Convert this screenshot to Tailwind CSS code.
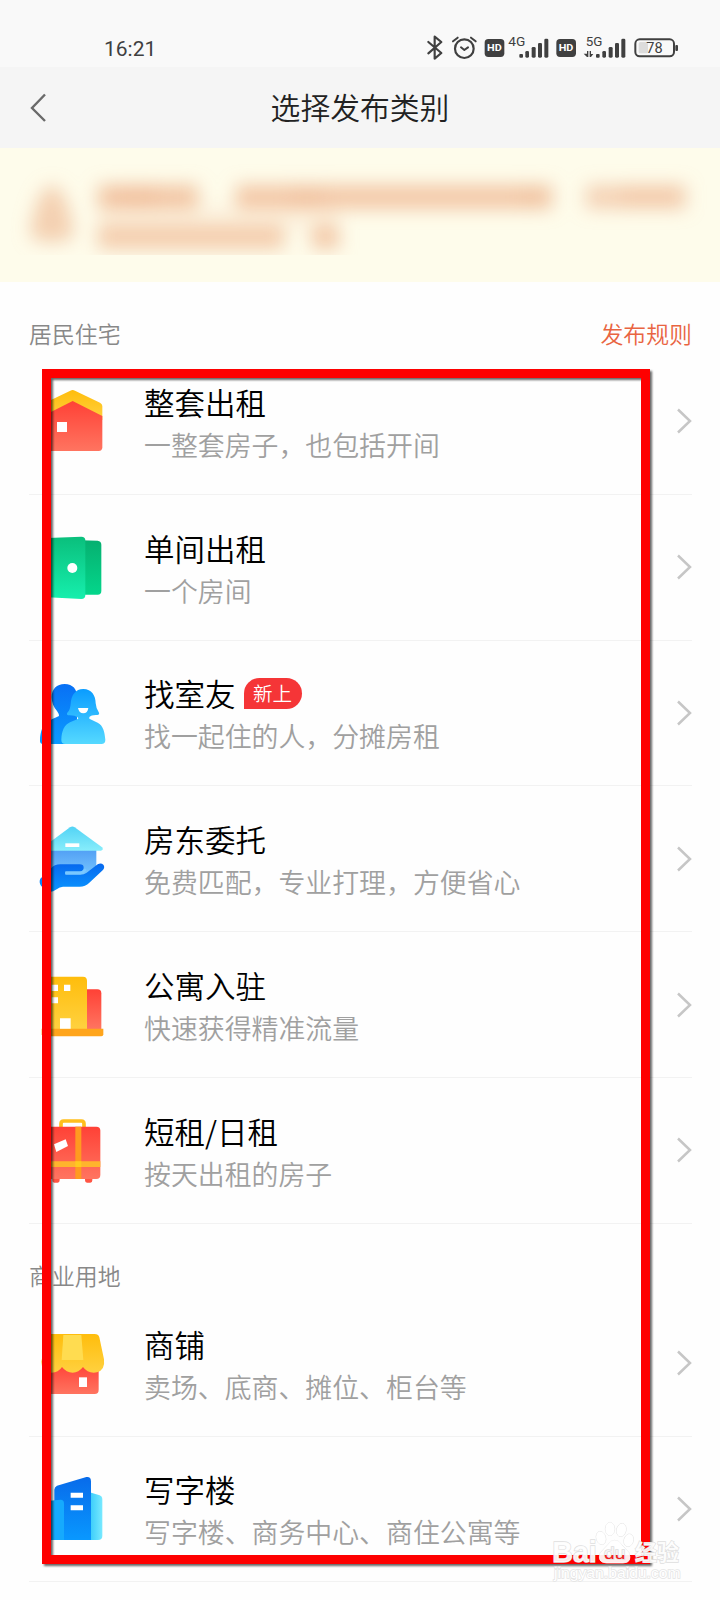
<!DOCTYPE html>
<html lang="zh-CN">
<head>
<meta charset="utf-8">
<meta name="viewport" content="width=720">
<title>选择发布类别</title>
<script src="https://cdn.jsdelivr.net/npm/@tailwindcss/browser@4"></script>
</head>
<body class="bg-white">
<div class="relative flex h-[1600px] w-[720px] flex-col overflow-hidden bg-[#fefefe] font-['Noto_Sans_CJK_SC','Noto_Sans',sans-serif]">

  <!-- Status bar -->
  <div class="flex h-[67px] shrink-0 items-end justify-between bg-[#f9f9f9] pl-[104px] pr-[39px] text-[#404040]">
    <span class="mb-[6px] font-['Roboto',sans-serif] text-[21px] leading-[24px]">16:21</span>
    <svg class="mb-[4px] h-[30px] w-[256px]" viewBox="75 40 768 90" fill="none" stroke="#404040" stroke-linecap="round" stroke-linejoin="round">
      <path d="M85 67L124 100L104 117V51L124 67L85 101" stroke-width="6.5"/>
      <circle cx="193" cy="87" r="28" stroke-width="6.5"/>
      <path d="M183 83L193 91L204 83M159 65L173 54M227 65L213 54" stroke-width="6"/>
      <g fill="#404040" stroke="none">
        <rect x="254" y="58" width="59" height="54" rx="11"/>
        <rect x="469" y="58" width="59" height="54" rx="11"/>
        <rect x="358" y="103" width="11" height="11" rx="3"/><rect x="376" y="94" width="11" height="20" rx="4"/><rect x="395" y="82" width="12" height="32" rx="4"/><rect x="414" y="70" width="12" height="44" rx="4"/><rect x="433" y="57" width="12" height="57" rx="4"/>
        <rect x="588" y="103" width="11" height="11" rx="3"/><rect x="607" y="94" width="11" height="20" rx="4"/><rect x="626" y="82" width="12" height="32" rx="4"/><rect x="645" y="70" width="12" height="44" rx="4"/><rect x="664" y="57" width="12" height="57" rx="4"/>
        <path d="M551 102H561V94H565V112H561ZM569 94H573V103H580L573 112H569Z"/>
        <rect x="826" y="76" width="8" height="18" rx="3"/>
      </g>
      <rect x="716" y="67" width="28" height="34" rx="5" fill="#dcdcdc" stroke="none"/>
      <rect x="706" y="59" width="116" height="51" rx="13" stroke-width="6"/>
      <g stroke="none" font-family="Roboto, sans-serif">
        <text x="261" y="95" font-size="29" font-weight="700" fill="#fff" textLength="44" lengthAdjust="spacingAndGlyphs">HD</text>
        <text x="476" y="95" font-size="29" font-weight="700" fill="#fff" textLength="44" lengthAdjust="spacingAndGlyphs">HD</text>
        <text x="325" y="79" font-size="37" font-weight="400" fill="#404040" textLength="51" lengthAdjust="spacingAndGlyphs">4G</text>
        <text x="557" y="79" font-size="37" font-weight="400" fill="#404040" textLength="50" lengthAdjust="spacingAndGlyphs">5G</text>
        <text x="739" y="100" font-size="42" font-weight="400" fill="#404040" textLength="49" lengthAdjust="spacingAndGlyphs">78</text>
      </g>
    </svg>
  </div>

  <!-- Title bar -->
  <header class="grid h-[81px] shrink-0 grid-cols-[120px_1fr_120px] items-center bg-[#f5f5f5]">
    <svg class="ml-[28px] h-[32px] w-[20px]" viewBox="0 0 20 32" fill="none" stroke="#6a6a6a" stroke-width="2.4"><path d="M17 2.5L4 16L17 29"/></svg>
    <h1 class="pb-[3px] text-center text-[29.8px] font-[350] leading-[44px] text-[#222]">选择发布类别</h1>
  </header>

  <!-- Notice, obscured -->
  <div class="flex h-[134px] shrink-0 bg-[#fefceb]">
    <svg class="h-[107px] w-[720px]" viewBox="0 148 720 107">
      <defs><filter id="haze" x="-20%" y="-60%" width="140%" height="220%"><feGaussianBlur stdDeviation="9"/></filter></defs>
      <g filter="url(#haze)" fill="#f0bd99">
        <path d="M52 185C67 190 70 215 74 232Q74 242 52 242T30 232C34 215 37 190 52 185Z" opacity=".7"/>
        <rect x="98" y="185" width="100" height="24" opacity=".85"/><rect x="115" y="186" width="42" height="20" opacity=".6"/>
        <rect x="236" y="185" width="316" height="24" opacity=".82"/><rect x="290" y="186" width="34" height="20" opacity=".5"/><rect x="520" y="186" width="28" height="20" opacity=".3"/>
        <rect x="586" y="185" width="100" height="24" opacity=".65"/><rect x="620" y="186" width="60" height="20" opacity=".4"/>
        <rect x="98" y="225" width="186" height="24" opacity=".75"/><rect x="312" y="225" width="27" height="24" opacity=".8"/>
        <rect x="98" y="205" width="240" height="24" opacity=".15"/>
      </g>
    </svg>
  </div>

  <!-- Residential -->
  <main class="flex flex-col pl-[29px] pr-[28px]">
    <div class="flex h-[67px] items-start justify-between pt-[34px] text-[22.9px] leading-[34px]">
      <h2 class="font-[350] text-[#888]">居民住宅</h2>
      <a class="font-[350] text-[#e96441]">发布规则</a>
    </div>

    <div class="flex h-[145.8px] items-center border-b border-[#f2f2f2] pl-[9px]">
      <svg class="size-[70px] shrink-0" viewBox="53 78 210 210">
        <defs>
          <linearGradient id="red" x2="0" y2="1"><stop stop-color="#ff4136"/><stop offset="1" stop-color="#ff7460"/></linearGradient>
          <linearGradient id="gold" x2="0" y2="1"><stop stop-color="#ffbd0c"/><stop offset="1" stop-color="#ffd13f"/></linearGradient>
        </defs>
        <path d="M68 137Q68 132 73 129L150 92Q157 88 164 92L239 128Q246 132 246 138V180H68Z" fill="url(#gold)"/>
        <path d="M68 168L157 123L246 168V262Q246 273 235 273H79Q68 273 68 262Z" fill="url(#red)"/>
        <path d="M110 186H140V216H110Z" fill="#fff"/>
      </svg>
      <div class="ml-[36px] flex-1 pt-[3px]">
        <h3 class="text-[30.5px] font-[350] leading-[44px] text-black">整套出租</h3>
        <p class="text-[26.9px] font-[350] leading-[42px] text-[#a0a0a0]">一整套房子，也包括开间</p>
      </div>
      <svg class="h-[26px] w-[16px]" viewBox="0 0 16 26" fill="none" stroke="#c6c6c6" stroke-width="2.5"><path d="M2 1.5L14 13L2 24.5"/></svg>
    </div>

    <div class="flex h-[145.8px] items-center border-b border-[#f2f2f2] pl-[9px]">
      <svg class="size-[70px] shrink-0" viewBox="53 517 210 210">
        <defs>
          <linearGradient id="green" x2="0" y2="1"><stop stop-color="#0abf7c"/><stop offset="1" stop-color="#16efad"/></linearGradient>
          <linearGradient id="leaf" x2="0" y2="1"><stop stop-color="#06b070"/><stop offset="1" stop-color="#04d68b"/></linearGradient>
        </defs>
        <path d="M180 542L232 543Q243 544 243 555V694Q243 705 232 705H180Z" fill="url(#leaf)"/>
        <path d="M72 546Q72 536 82 535L183 531Q195 531 195 542V707Q195 718 183 718L82 713Q72 712 72 702Z" fill="url(#green)"/>
        <circle cx="156" cy="625" r="15" fill="#fff"/>
      </svg>
      <div class="ml-[36px] flex-1 pt-[3px]">
        <h3 class="text-[30.5px] font-[350] leading-[44px] text-black">单间出租</h3>
        <p class="text-[26.9px] font-[350] leading-[42px] text-[#a0a0a0]">一个房间</p>
      </div>
      <svg class="h-[26px] w-[16px]" viewBox="0 0 16 26" fill="none" stroke="#c6c6c6" stroke-width="2.5"><path d="M2 1.5L14 13L2 24.5"/></svg>
    </div>

    <div class="flex h-[145.8px] items-center border-b border-[#f2f2f2] pl-[9px]">
      <svg class="size-[70px] shrink-0" viewBox="53 54 210 210">
        <defs>
          <linearGradient id="navy" x2="0" y2="1"><stop stop-color="#0870f5"/><stop offset="1" stop-color="#0b9bff"/></linearGradient>
          <linearGradient id="sky" x2="0" y2="1"><stop stop-color="#0a9cff"/><stop offset="1" stop-color="#55d9ff"/></linearGradient>
        </defs>
        <path d="M133 72C158 72 170 89 170 108V252H68Q58 252 59 240C62 198 72 187 116 168Q116 161 110 153C100 142 94 128 94 112C94 87 109 72 133 72Z" fill="url(#navy)"/>
        <path d="M189 87C214 87 226 107 226 130Q227 146 236 158Q238 164 231 165Q213 164 207 171V176L232 188C249 197 253 216 255 239Q255 252 243 252H135Q123 252 123 240C124 212 132 195 149 187L174 176L172 172Q163 165 143 166Q137 163 142 157Q150 148 151 131C153 106 165 87 189 87Z" fill="url(#sky)"/>
        <path d="M173 144H204Q202 160 189 160Q176 160 173 144Z" fill="#fff"/>
      </svg>
      <div class="ml-[36px] flex-1 pt-[3px]">
        <div class="flex h-[44px] items-center">
          <h3 class="text-[30.5px] font-[350] leading-[44px] text-black">找室友</h3>
          <span class="ml-[8px] flex h-[31px] w-[58px] items-center justify-center rounded-full rounded-bl-[2px] bg-[#f53537] pb-[2px] text-[19.5px] font-[350] leading-none text-white">新上</span>
        </div>
        <p class="text-[26.9px] font-[350] leading-[42px] text-[#a0a0a0]">找一起住的人，分摊房租</p>
      </div>
      <svg class="h-[26px] w-[16px]" viewBox="0 0 16 26" fill="none" stroke="#c6c6c6" stroke-width="2.5"><path d="M2 1.5L14 13L2 24.5"/></svg>
    </div>

    <div class="flex h-[145.8px] items-center border-b border-[#f2f2f2] pl-[9px]">
      <svg class="size-[70px] shrink-0" viewBox="53 491 210 210">
        <defs>
          <linearGradient id="wall" x2="0" y2="1"><stop stop-color="#4e9bf3"/><stop offset="1" stop-color="#79c8ff"/></linearGradient>
          <linearGradient id="roof" x2="0" y2="1"><stop stop-color="#52d3f5"/><stop offset="1" stop-color="#87edfb"/></linearGradient>
          <linearGradient id="hand" x2="0" y2="1"><stop stop-color="#0768ee"/><stop offset="1" stop-color="#0a96ff"/></linearGradient>
        </defs>
        <path d="M84 560H228V625L190 650H84Z" fill="url(#wall)"/>
        <path d="M149 501Q156 496 163 501L245 561Q251 569 242 571H71Q62 569 68 561Z" fill="url(#roof)"/>
        <rect x="135" y="549" width="42" height="11" fill="#fff"/>
        <path d="M60 655L92 624Q102 612 120 612H178Q190 612 190 622Q190 633 177 633H135V643H180Q191 643 199 637L232 612Q242 606 249 613Q255 621 247 630L207 667Q195 679 178 679H128Q118 680 109 687Q96 697 80 694L62 676Q55 665 60 655Z" fill="url(#hand)"/>
        <path d="M138 638H179Q188 638 194 629" fill="none" stroke="#79c8ff" stroke-width="8" stroke-linecap="round"/>
      </svg>
      <div class="ml-[36px] flex-1 pt-[3px]">
        <h3 class="text-[30.5px] font-[350] leading-[44px] text-black">房东委托</h3>
        <p class="text-[26.9px] font-[350] leading-[42px] text-[#a0a0a0]">免费匹配，专业打理，方便省心</p>
      </div>
      <svg class="h-[26px] w-[16px]" viewBox="0 0 16 26" fill="none" stroke="#c6c6c6" stroke-width="2.5"><path d="M2 1.5L14 13L2 24.5"/></svg>
    </div>

    <div class="flex h-[145.8px] items-center border-b border-[#f2f2f2] pl-[9px]">
      <svg class="size-[70px] shrink-0" viewBox="53 59 210 210">
        <path d="M190 117H231Q243 117 243 129V236H190Z" fill="url(#red)"/>
        <path d="M72 92Q72 79 84 79H188Q200 79 200 92V236H72Z" fill="url(#gold)"/>
        <path d="M64 235H249V252Q249 258 243 258H70Q64 258 64 252Z" fill="#ffa51c"/>
        <path d="M94 103H113V122H94ZM131 103H150V122H131ZM94 141H113V159H94ZM119 204H151V235H119Z" fill="#fff"/>
      </svg>
      <div class="ml-[36px] flex-1 pt-[3px]">
        <h3 class="text-[30.5px] font-[350] leading-[44px] text-black">公寓入驻</h3>
        <p class="text-[26.9px] font-[350] leading-[42px] text-[#a0a0a0]">快速获得精准流量</p>
      </div>
      <svg class="h-[26px] w-[16px]" viewBox="0 0 16 26" fill="none" stroke="#c6c6c6" stroke-width="2.5"><path d="M2 1.5L14 13L2 24.5"/></svg>
    </div>

    <div class="flex h-[145.8px] items-center border-b border-[#f2f2f2] pl-[9px]">
      <svg class="size-[70px] shrink-0" viewBox="53 496 210 210">
        <path d="M122 532V522Q122 514 130 514H183Q191 514 191 522V532" fill="none" stroke="#ffbf1d" stroke-width="11"/>
        <path d="M96 680H118V692Q118 699 112 699H102Q96 699 96 692ZM194 680H216V692Q216 699 210 699H200Q194 699 194 692Z" fill="#ff5544"/>
        <rect x="74" y="531" width="166" height="157" rx="12" fill="url(#red)"/>
        <path d="M165 531H183V688H165Z" fill="#ff9a20"/>
        <path d="M74 635H240V652H74Z" fill="#ffb42d"/>
        <path d="M165 635H183V652H165Z" fill="#ffc91f"/>
        <path d="M101 584L136 569L143 589L108 607Z" fill="#fff"/>
      </svg>
      <div class="ml-[36px] flex-1 pt-[3px]">
        <h3 class="text-[30.5px] font-[350] leading-[44px] text-black">短租/日租</h3>
        <p class="text-[26.9px] font-[350] leading-[42px] text-[#a0a0a0]">按天出租的房子</p>
      </div>
      <svg class="h-[26px] w-[16px]" viewBox="0 0 16 26" fill="none" stroke="#c6c6c6" stroke-width="2.5"><path d="M2 1.5L14 13L2 24.5"/></svg>
    </div>

    <!-- Commercial -->
    <div class="flex h-[67px] items-start pt-[34px] text-[22.9px] leading-[34px]">
      <h2 class="font-[350] text-[#888]">商业用地</h2>
    </div>

    <div class="flex h-[145.8px] items-center border-b border-[#f2f2f2] pl-[9px]">
      <svg class="size-[70px] shrink-0" viewBox="53 264 210 210">
        <path d="M80 370H235V449Q235 462 223 462H92Q80 462 80 450Z" fill="url(#red)"/>
        <path d="M92 282H223Q234 282 237 292L251 358Q255 390 230 397Q203 402 188 381Q175 398 157 398Q138 398 125 381Q114 398 94 398Q63 395 63 365L78 292Q81 282 92 282Z" fill="url(#gold)"/>
        <path d="M129 285H183L189 360H124Z" fill="#ffdc50"/>
        <path d="M176 412H200V441H176Z" fill="#fff"/>
      </svg>
      <div class="ml-[36px] flex-1 pt-[3px]">
        <h3 class="text-[30.5px] font-[350] leading-[44px] text-black">商铺</h3>
        <p class="text-[26.9px] font-[350] leading-[42px] text-[#a0a0a0]">卖场、底商、摊位、柜台等</p>
      </div>
      <svg class="h-[26px] w-[16px]" viewBox="0 0 16 26" fill="none" stroke="#c6c6c6" stroke-width="2.5"><path d="M2 1.5L14 13L2 24.5"/></svg>
    </div>

    <div class="flex h-[145.8px] items-center border-b border-[#f2f2f2] pl-[9px]">
      <svg class="size-[70px] shrink-0" viewBox="53 702 210 210">
        <defs>
          <linearGradient id="aqua"><stop stop-color="#32c9fa"/><stop offset="1" stop-color="#78e9ff"/></linearGradient>
          <linearGradient id="tower" x2="0" y2="1"><stop stop-color="#086bea"/><stop offset="1" stop-color="#0998ff"/></linearGradient>
        </defs>
        <path d="M205 756L238 766Q246 769 246 779V887Q246 900 233 900H205Z" fill="url(#aqua)"/>
        <path d="M102 749Q102 741 110 737L198 711Q212 709 212 724V900H102Z" fill="url(#tower)"/>
        <path d="M72 790Q72 784 80 783L121 779Q131 779 131 790V900H80Q72 900 72 890Z" fill="#16aafd"/>
        <path d="M151 758H188V773H151ZM151 796H188V811H151Z" fill="#fff"/>
      </svg>
      <div class="ml-[36px] flex-1 pt-[3px]">
        <h3 class="text-[30.5px] font-[350] leading-[44px] text-black">写字楼</h3>
        <p class="text-[26.9px] font-[350] leading-[42px] text-[#a0a0a0]">写字楼、商务中心、商住公寓等</p>
      </div>
      <svg class="h-[26px] w-[16px]" viewBox="0 0 16 26" fill="none" stroke="#c6c6c6" stroke-width="2.5"><path d="M2 1.5L14 13L2 24.5"/></svg>
    </div>
  </main>

  <!-- Highlight frame over the list -->
  <div class="pointer-events-none absolute left-[42px] top-[369px] h-[1195px] w-[608px] border-[9.5px] border-[#fe0000] drop-shadow-[2px_2px_1px_rgba(0,0,0,0.6)]"></div>

  <!-- Watermark over the list -->
  <svg class="absolute left-[545px] top-[1515px] h-[70px] w-[150px]" viewBox="75 105 450 210" fill="#fff" stroke="#dedede" stroke-width="2.5" paint-order="stroke" font-family="'Liberation Sans','Noto Sans CJK SC',sans-serif">
    <defs>
      <linearGradient id="cut" gradientUnits="userSpaceOnUse" x1="0" y1="190" x2="0" y2="250"><stop offset=".58" stop-color="#f6f6f6"/><stop offset=".6" stop-color="#f31d1d"/></linearGradient>
    </defs>
    <g fill-opacity=".92">
      <ellipse cx="243" cy="174" rx="14" ry="20" transform="rotate(-15 243 174)"/>
      <ellipse cx="270" cy="147" rx="14" ry="20"/>
      <ellipse cx="304" cy="150" rx="14" ry="20" transform="rotate(12 304 150)"/>
      <ellipse cx="326" cy="181" rx="14" ry="19" transform="rotate(15 326 181)"/>
      <path d="M284 181Q297 181 305 194L326 217Q339 248 309 249H259Q230 247 241 218L264 194Q272 181 284 181Z"/>
    </g>
    <text x="97" y="247" font-size="88" font-weight="700" textLength="133" lengthAdjust="spacingAndGlyphs" fill-opacity=".92" stroke-width="4">Bai</text>
    <text x="252" y="238" font-size="50" textLength="64" lengthAdjust="spacingAndGlyphs" fill="url(#cut)" stroke="#ddd" stroke-width="4">du</text>
    <text x="345" y="241" font-size="66" font-weight="700" textLength="132" font-family="'Noto Sans CJK SC',sans-serif" fill-opacity=".9" stroke-width="4">经验</text>
    <text x="102" y="294" font-size="42" textLength="380" lengthAdjust="spacingAndGlyphs" stroke="#e4e4e4" stroke-width="4">jingyan.baidu.com</text>
  </svg>
</div>
</body>
</html>
